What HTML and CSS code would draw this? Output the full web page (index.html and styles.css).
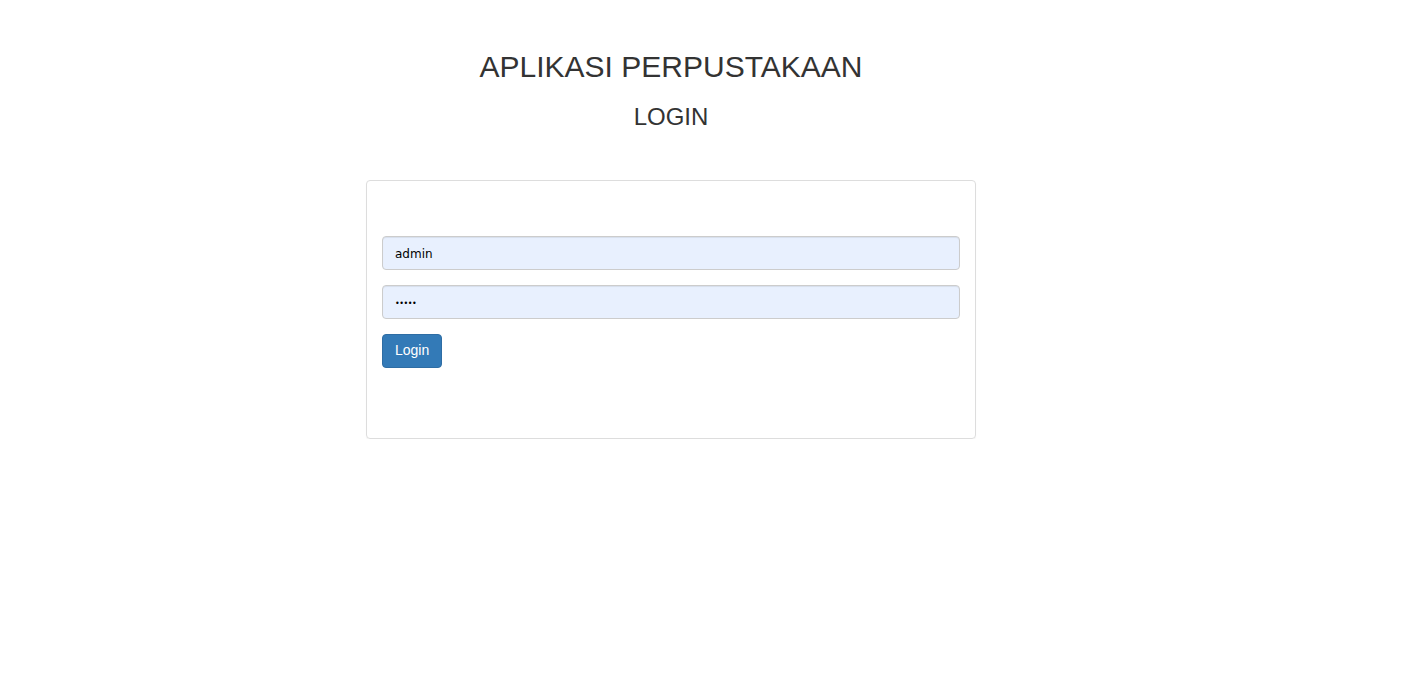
FILE: index.html
```html
<!DOCTYPE html>
<html lang="id">
<head>
<meta charset="utf-8">
<title>Aplikasi Perpustakaan - Login</title>
<link rel="stylesheet" href="styles.css">
</head>
<body>
<div class="page">
  <h2 class="title">APLIKASI PERPUSTAKAAN</h2>
  <h3 class="subtitle">LOGIN</h3>
  <div class="panel">
    <form class="panel-body">
      <div class="form-group">
        <input class="form-control" type="text" value="admin">
      </div>
      <div class="form-group">
        <input class="form-control form-control-pass" type="password" value="admin">
      </div>
      <button class="btn" type="button">Login</button>
    </form>
  </div>
</div>
</body>
</html>
```
FILE: styles.css
```css
html, body {
  margin: 0;
  padding: 0;
  background: #fff;
}
body {
  font-family: "Liberation Sans", Arial, sans-serif;
  font-size: 14px;
  line-height: 1.42857;
  color: #333;
}
.page {
  width: 1342px;
  display: flex;
  flex-direction: column;
  align-items: center;
  padding-top: 30px;
}
.title {
  margin: 20px 0 10px;
  font-size: 30px;
  font-weight: 500;
  line-height: 1.1;
}
.subtitle {
  margin: 11px 0 0;
  font-size: 24px;
  font-weight: 500;
  line-height: 1.1;
}
.panel {
  box-sizing: border-box;
  width: 610px;
  margin-top: 50px;
  border: 1px solid #ddd;
  border-radius: 4px;
  box-shadow: 0 1px 1px rgba(0,0,0,0.05);
}
.panel-body {
  padding: 55px 15px 70px;
  margin: 0;
}
.form-group {
  margin-bottom: 15px;
}
.form-control {
  display: block;
  box-sizing: border-box;
  width: 100%;
  height: 34px;
  padding: 7px 12px 5px;
  font-family: "DejaVu Sans", Verdana, sans-serif;
  font-size: 12px;
  color: #000;
  background: #e8f0fe;
  border: 1px solid #ccc;
  border-radius: 4px;
  box-shadow: inset 0 1px 1px rgba(0,0,0,0.075);
  outline: none;
}
.form-control-pass {
  font-size: 8px;
  letter-spacing: -0.5px;
}
.btn {
  display: block;
  box-sizing: border-box;
  height: 34px;
  padding: 6px 12px;
  font-family: "Liberation Sans", Arial, sans-serif;
  font-size: 14px;
  line-height: 1.42857;
  color: #fff;
  background: #337ab7;
  border: 1px solid #2e6da4;
  border-radius: 4px;
  cursor: pointer;
}
```
